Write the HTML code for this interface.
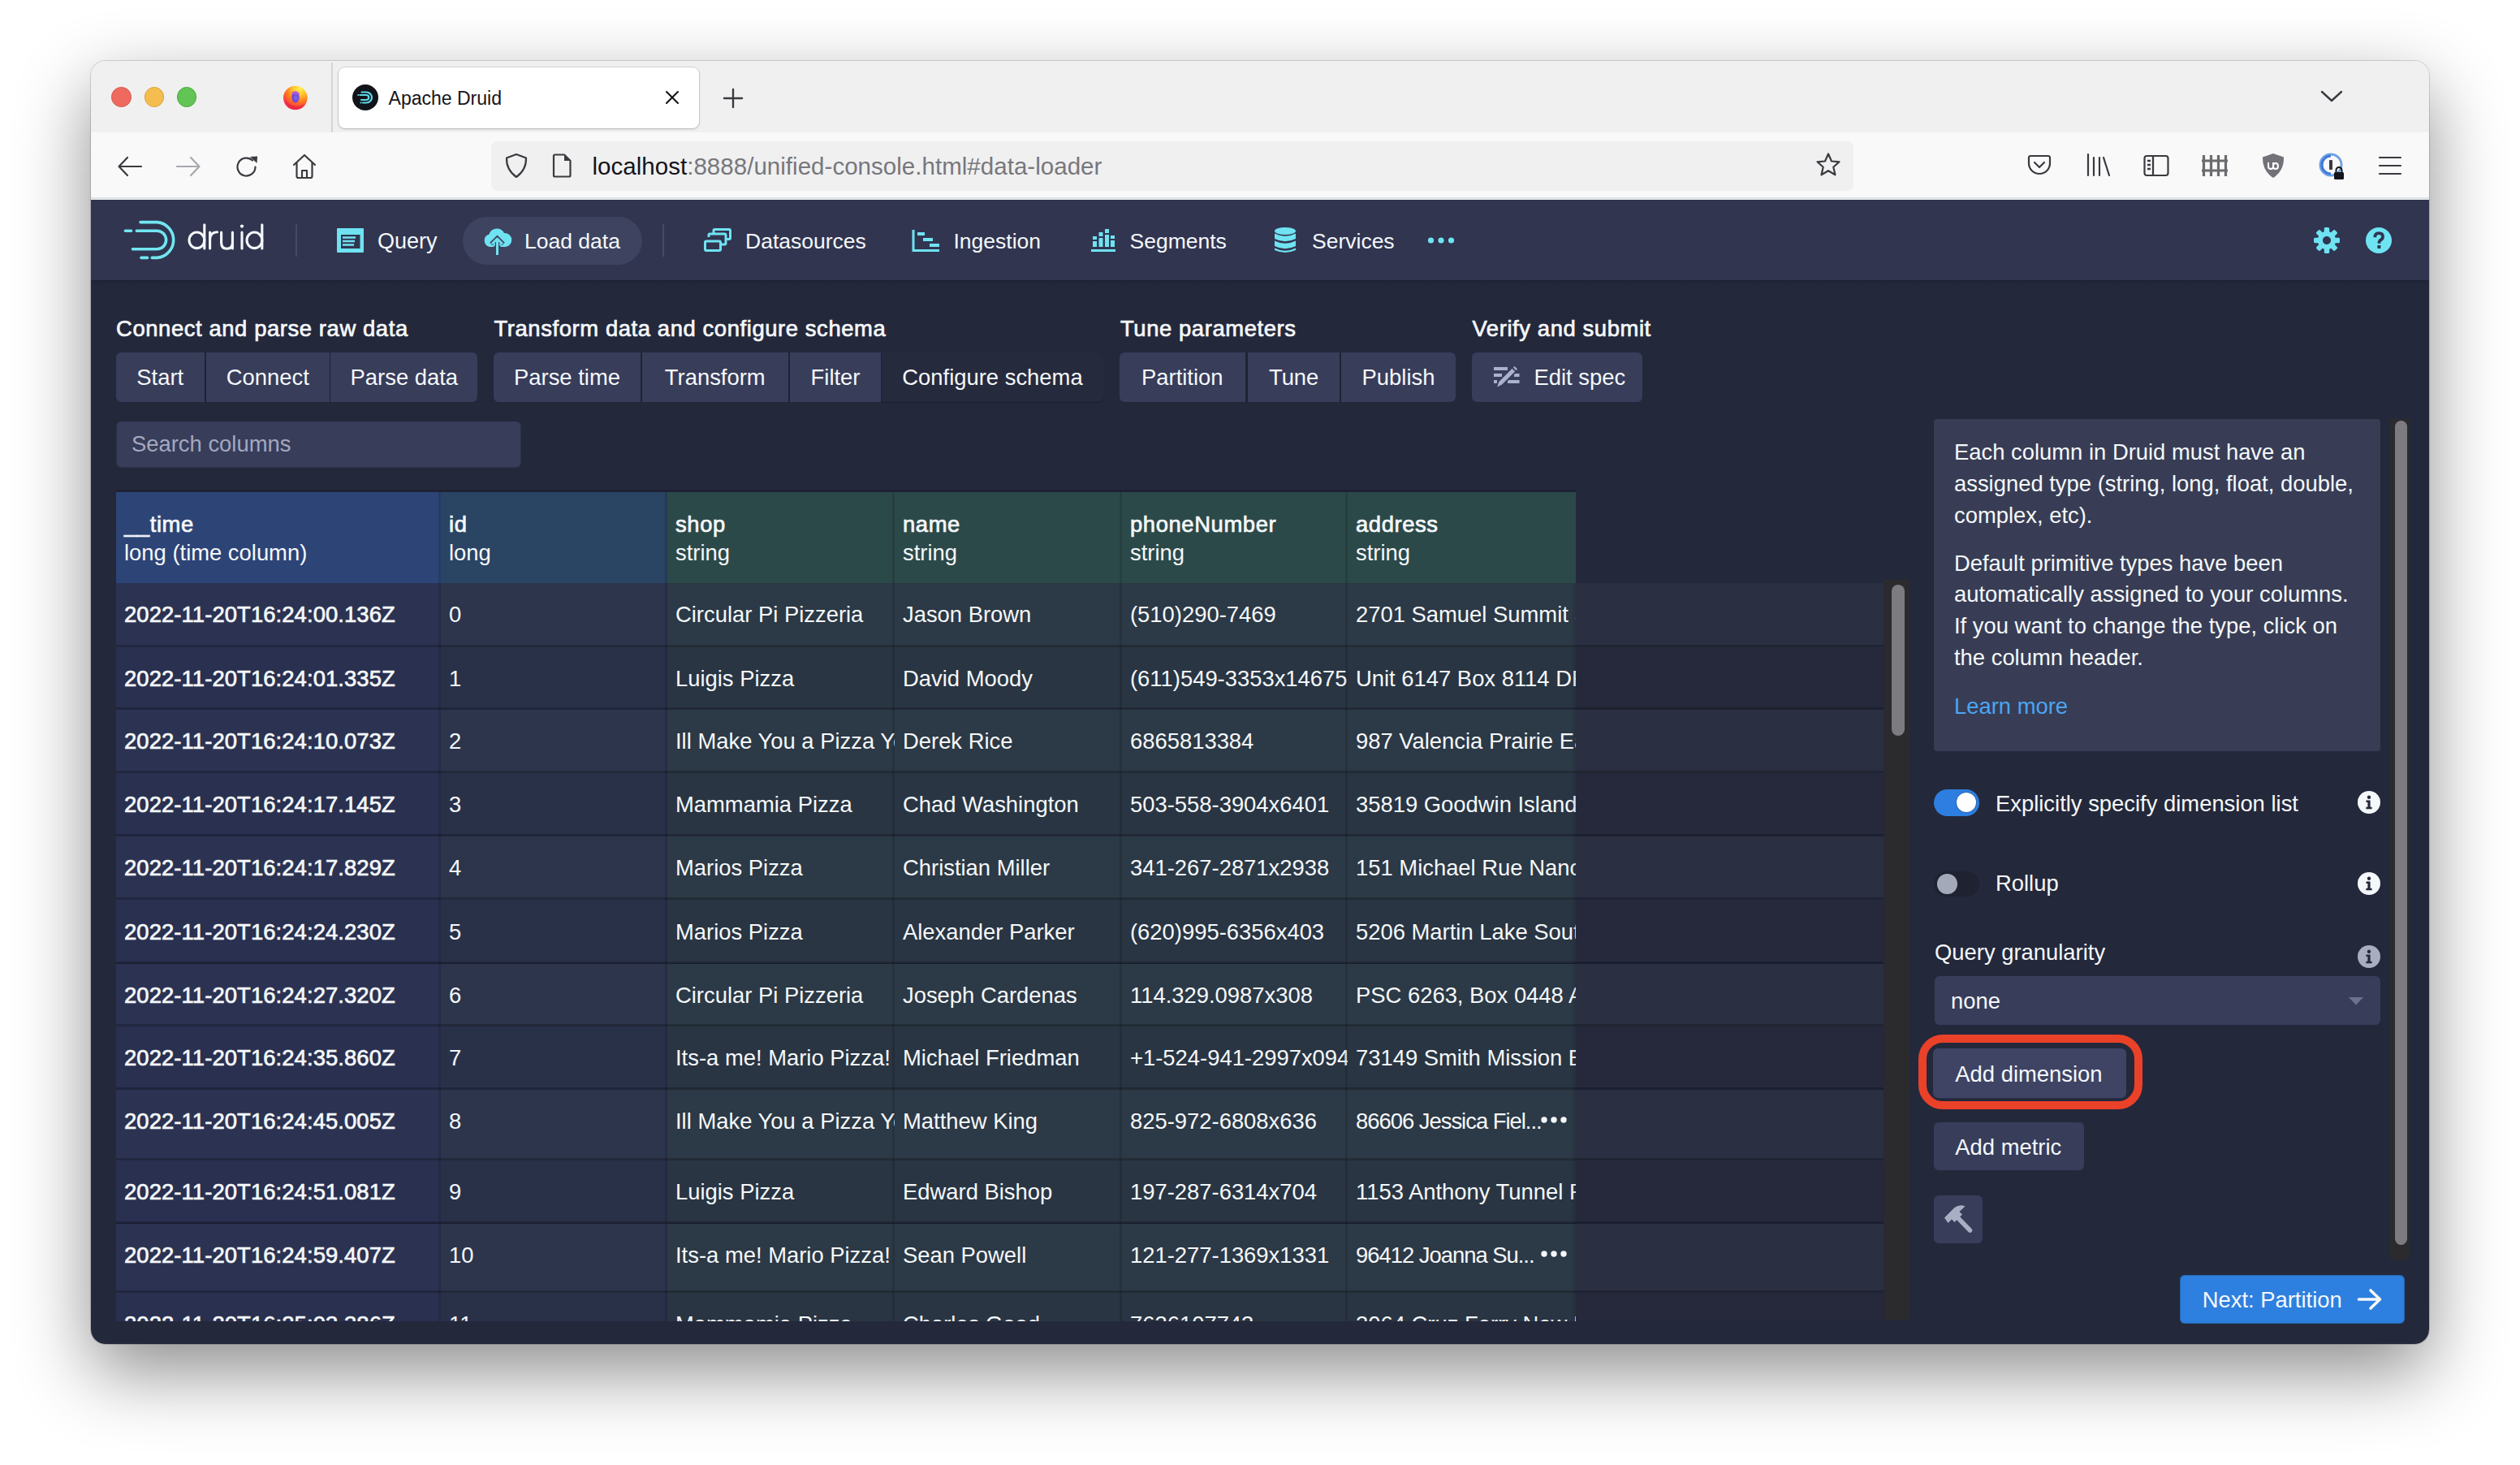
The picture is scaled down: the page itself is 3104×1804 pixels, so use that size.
<!DOCTYPE html>
<html><head><meta charset="utf-8">
<style>
*{box-sizing:border-box;margin:0;padding:0}
html,body{width:3104px;height:1804px;overflow:hidden;background:#ffffff;font-family:"Liberation Sans",sans-serif}
.abs{position:absolute}
#win{position:absolute;left:112px;top:75px;width:2880px;height:1580px;border-radius:18px;overflow:hidden;background:#f0f0f0;
 box-shadow:0 0 0 1px rgba(0,0,0,0.14),0 34px 90px 0 rgba(0,0,0,0.45)}
#inner{position:absolute;left:-112px;top:-75px;width:3104px;height:1804px}
.t{position:absolute;white-space:pre;line-height:1}
.w{color:#f5f8fa}
</style></head>
<body>
<div id="win"><div id="inner">
 <!-- tab bar -->
 <div class="abs" style="left:0;top:75px;width:3104px;height:88px;background:#f0f0f0"></div>
 <!-- toolbar -->
 <div class="abs" style="left:0;top:163px;width:3104px;height:82px;background:#f9f9f9;border-bottom:2px solid #dde3ea"></div>

 <!-- traffic lights -->
 <div class="abs" style="left:137.4px;top:107.4px;width:24.5px;height:24.5px;border-radius:50%;background:#ee6a5f;border:1px solid #d8584e"></div>
 <div class="abs" style="left:177.5px;top:107.4px;width:24.5px;height:24.5px;border-radius:50%;background:#f5bd4f;border:1px solid #d9a13a"></div>
 <div class="abs" style="left:217.6px;top:107.4px;width:24.5px;height:24.5px;border-radius:50%;background:#61c454;border:1px solid #4ea73f"></div>
 <!-- firefox logo -->
 <svg class="abs" style="left:348px;top:104px" width="32" height="32" viewBox="0 0 32 32">
  <defs><radialGradient id="ffg" cx="0.68" cy="0.12" r="1"><stop offset="0" stop-color="#fff44f"/><stop offset="0.3" stop-color="#ffbd2e"/><stop offset="0.55" stop-color="#ff7a1a"/><stop offset="0.8" stop-color="#ff3a45"/><stop offset="1" stop-color="#d91c5a"/></radialGradient>
  <radialGradient id="ffp" cx="0.55" cy="0.55" r="0.6"><stop offset="0" stop-color="#7a6bff"/><stop offset="1" stop-color="#6b34c9"/></radialGradient></defs>
  <circle cx="15.8" cy="16.5" r="14.8" fill="url(#ffg)"/>
  <ellipse cx="16" cy="15.8" rx="4.6" ry="6.8" fill="url(#ffp)"/>
  <path d="M11.5 10 Q16 6.5 20.5 10.5 L20.5 13.5 Q16 11 11.5 13 Z" fill="#b158d8"/>
  <path d="M3 18 Q4 26 12 30 Q22 32 28 24 Q20 29 12 26 Q6 23 3 18 Z" fill="#e3283e" opacity="0.8"/>
 </svg>
 <!-- tab separator -->
 <div class="abs" style="left:407.5px;top:77px;width:2px;height:86px;background:#d4d4d8"></div>
 <!-- active tab -->
 <div class="abs" style="left:417px;top:83px;width:444px;height:75px;background:#ffffff;border-radius:8px;box-shadow:0 0 0 1px rgba(0,0,0,0.10),0 1px 3px rgba(0,0,0,0.18)"></div>
 <svg class="abs" style="left:434px;top:103.6px" width="32" height="32" viewBox="0 0 32 32">
  <circle cx="16" cy="16" r="16" fill="#111419"/>
  <path d="M11.5 9.5 H17.5 A6.5 6.5 0 0 1 17.5 22.5 H13" fill="none" stroke="#5fd8ea" stroke-width="2.2" stroke-linecap="round"/>
  <path d="M9.5 13 H17.2 A3 3 0 0 1 17.2 19 H11" fill="none" stroke="#5fd8ea" stroke-width="2.2" stroke-linecap="round"/>
  <circle cx="7.3" cy="13" r="1.1" fill="#5fd8ea"/><circle cx="10.5" cy="22.5" r="1.1" fill="#5fd8ea"/>
 </svg>
 <div class="t" style="left:478.6px;top:110px;font-size:23px;color:#15141a">Apache Druid</div>
 <svg class="abs" style="left:819px;top:111px" width="18" height="18" viewBox="0 0 18 18"><path d="M2 2 L16 16 M16 2 L2 16" stroke="#15141a" stroke-width="2.1" stroke-linecap="round"/></svg>
 <svg class="abs" style="left:889px;top:107px" width="28" height="28" viewBox="0 0 28 28"><path d="M14 3 V25 M3 14 H25" stroke="#3a3a40" stroke-width="2.4" stroke-linecap="round"/></svg>
 <svg class="abs" style="left:2857px;top:109px" width="30" height="20" viewBox="0 0 30 20"><path d="M3 4 L15 15 L27 4" fill="none" stroke="#3a3a40" stroke-width="2.4" stroke-linecap="round" stroke-linejoin="round"/></svg>

 <!-- toolbar nav icons -->
 <svg class="abs" style="left:143px;top:190px" width="34" height="30" viewBox="0 0 34 30"><path d="M31 15 H4 M14 4 L3.5 15 L14 26" fill="none" stroke="#3a3a40" stroke-width="2.2" stroke-linecap="round" stroke-linejoin="round"/></svg>
 <svg class="abs" style="left:215px;top:190px" width="34" height="30" viewBox="0 0 34 30"><path d="M3 15 H30 M20 4 L30.5 15 L20 26" fill="none" stroke="#a8a8ad" stroke-width="2.2" stroke-linecap="round" stroke-linejoin="round"/></svg>
 <svg class="abs" style="left:288px;top:190px" width="32" height="32" viewBox="0 0 32 32"><path d="M26.5 15.5 A11 11 0 1 1 23 7.5" fill="none" stroke="#3a3a40" stroke-width="2.2" stroke-linecap="round"/><path d="M20 3 L29 2.5 L28.5 11 Z" fill="#3a3a40"/></svg>
 <svg class="abs" style="left:359px;top:188px" width="32" height="33" viewBox="0 0 32 33"><path d="M3 15 L16 3 L29 15 M6.5 12 V29 Q6.5 31 8.5 31 H23.5 Q25.5 31 25.5 29 V12 M13 31 V22 H19 V31" fill="none" stroke="#3a3a40" stroke-width="2.2" stroke-linecap="round" stroke-linejoin="round"/></svg>

 <!-- url bar -->
 <div class="abs" style="left:605px;top:174px;width:1678px;height:61px;background:#f0f0f0;border-radius:8px"></div>
 <svg class="abs" style="left:620px;top:187px" width="32" height="34" viewBox="0 0 32 34"><path d="M16 3 L28 7.5 Q28.5 22 16 31 Q3.5 22 4 7.5 Z" fill="none" stroke="#3a3a40" stroke-width="2.2" stroke-linejoin="round"/></svg>
 <svg class="abs" style="left:678px;top:188px" width="28" height="32" viewBox="0 0 28 32"><path d="M4 4 Q4 2.5 5.5 2.5 H17 L24.5 10 V28 Q24.5 29.5 23 29.5 H5.5 Q4 29.5 4 28 Z" fill="none" stroke="#3a3a40" stroke-width="2.2" stroke-linejoin="round"/><path d="M17 2.5 V10 H24.5 Z" fill="#3a3a40"/></svg>
 <div class="t" style="left:729.5px;top:189.5px;font-size:29.5px;letter-spacing:0.03px;color:#15141a">localhost<span style="color:#77777d">:8888/unified-console.html#data-loader</span></div>
 <svg class="abs" style="left:2235px;top:186px" width="34" height="34" viewBox="0 0 34 34"><path d="M17 3.5 L21 12.5 L30.5 13.3 L23.3 19.7 L25.5 29.3 L17 24.2 L8.5 29.3 L10.7 19.7 L3.5 13.3 L13 12.5 Z" fill="none" stroke="#3a3a40" stroke-width="2.2" stroke-linejoin="round"/></svg>

 <!-- right toolbar icons -->
 <svg class="abs" style="left:2496px;top:187px" width="32" height="32" viewBox="0 0 32 32"><path d="M5 5 H27 Q29 5 29 7.5 V14 A13 13 0 0 1 3 14 V7.5 Q3 5 5 5 Z" fill="none" stroke="#3a3a40" stroke-width="2.2"/><path d="M10 13 L16 19 L22 13" fill="none" stroke="#3a3a40" stroke-width="2.2" stroke-linecap="round" stroke-linejoin="round"/></svg>
 <svg class="abs" style="left:2568px;top:187px" width="34" height="32" viewBox="0 0 34 32"><path d="M4 3 V29 M11 7 V29 M18 7 V29 M23 7 L30 29" fill="none" stroke="#3a3a40" stroke-width="2.2" stroke-linecap="round"/></svg>
 <svg class="abs" style="left:2639px;top:189px" width="34" height="30" viewBox="0 0 34 30"><rect x="2.5" y="3" width="29" height="24" rx="3" fill="none" stroke="#3a3a40" stroke-width="2.2"/><path d="M13 3 V27 M6 9 H10 M6 14 H10 M6 19 H10" stroke="#3a3a40" stroke-width="2.3"/></svg>
 <svg class="abs" style="left:2711px;top:188px" width="34" height="32" viewBox="0 0 34 32"><path d="M3.5 3 V29 M12.5 3 V29 M21.5 3 V29 M30.5 3 V29 M1 10 H33 M1 22 H33" fill="none" stroke="#6b6b70" stroke-width="3.2"/></svg>
 <svg class="abs" style="left:2784px;top:187px" width="32" height="34" viewBox="0 0 32 34"><path d="M16 2 L29 6.5 Q29.5 23 16 32 Q2.5 23 3 6.5 Z" fill="#727278"/><path d="M10 13 V18 Q10 21 13 21 Q16 21 16 18 V13 M16 18 Q16 14 19 14 Q22 14 22 17.5 Q22 21 19 21 Q16 21 16 18" fill="none" stroke="#ffffff" stroke-width="2"/></svg>
 <svg class="abs" style="left:2855px;top:187px" width="34" height="36" viewBox="0 0 34 36"><circle cx="16" cy="16" r="13" fill="none" stroke="#6ea2e6" stroke-width="3"/><path d="M16 5 A11 11 0 0 0 16 27" fill="none" stroke="#3f7ad6" stroke-width="3"/><rect x="14" y="10" width="4" height="12" rx="1" fill="#3a3a40"/><rect x="20" y="25" width="12" height="9" rx="1.5" fill="#15141a"/><path d="M22.5 25 V22.5 A3.5 3.5 0 0 1 29.5 22.5 V25" fill="none" stroke="#15141a" stroke-width="2"/></svg>
 <svg class="abs" style="left:2927px;top:189px" width="34" height="30" viewBox="0 0 34 30"><path d="M4 5 H30 M4 15 H30 M4 25 H30" stroke="#3a3a40" stroke-width="2.2" stroke-linecap="round"/></svg>

 <!-- druid header -->
 <div class="abs" style="left:0;top:246px;width:3104px;height:99px;background:#313550"></div>
 <!-- content -->
 <div class="abs" style="left:0;top:345px;width:3104px;height:1310px;background:#24283b"></div>
 <div class="abs" style="left:0;top:345px;width:3104px;height:5px;background:linear-gradient(#1d2136,rgba(36,40,59,0))"></div>

 <!-- druid logo -->
 <svg class="abs" style="left:140px;top:260px" width="200" height="70" viewBox="140 260 200 70">
  <g fill="none" stroke="#72e6f0" stroke-width="3.6" stroke-linecap="round">
   <path d="M173 273.6 H193.8 A22 22 0 0 1 193.8 317.4 H187.3"/>
   <path d="M174 317.4 H181.5"/>
   <path d="M168.3 284.3 H193.4 A11.2 11.2 0 0 1 193.4 306.7 H163.5"/>
   <path d="M154.5 284.3 H161.5"/>
  </g>
  <g fill="none" stroke="#f5f8fa" stroke-width="3.1" stroke-linecap="round">
   <ellipse cx="242.4" cy="295.8" rx="9.4" ry="9.8"/><path d="M251.8 276.8 V306"/>
   <path d="M258.6 286 V306 M258.6 295 Q258.8 286 267.6 285.8"/>
   <path d="M272.6 286 V299 Q272.6 306.2 279.5 306.2 Q286.4 306.2 286.4 299 M286.4 286 V306"/>
   <path d="M298 286 V306"/>
   <ellipse cx="313.4" cy="295.8" rx="9.4" ry="9.8"/><path d="M322.8 276.8 V306"/>
  </g>
  <circle cx="298" cy="278.6" r="2.1" fill="#f5f8fa"/>
 </svg>
 <div class="abs" style="left:364px;top:276px;width:2px;height:40px;background:#454a66"></div>
 <!-- query icon -->
 <svg class="abs" style="left:415px;top:281px" width="34" height="30" viewBox="0 0 34 30"><rect x="0" y="0" width="33" height="30" rx="1" fill="#6fe3f2"/><rect x="5" y="8" width="23.5" height="17" fill="#313550"/><path d="M7 11.5 H23 M7 16 H22 M7 20.5 H21" stroke="#6fe3f2" stroke-width="2.4"/></svg>
 <div class="t w" style="left:465px;top:283.5px;font-size:27px">Query</div>
 <div class="abs" style="left:570px;top:267px;width:221px;height:59px;border-radius:30px;background:#3e4360"></div>
 <svg class="abs" style="left:594px;top:279px" width="37" height="36" viewBox="0 0 37 36"><path d="M9 25 A8 8 0 0 1 8.5 9.5 A10 10 0 0 1 27 8 A8.5 8.5 0 0 1 28.5 25 H23 L18.5 19.5 L14 25 Z" fill="#6fe3f2"/><path d="M18.5 14 V35 M11 21.5 L18.5 14 L26 21.5" fill="none" stroke="#3e4360" stroke-width="5"/><path d="M18.5 15 V35 M12 21.5 L18.5 15 L25 21.5" fill="none" stroke="#6fe3f2" stroke-width="3" stroke-linejoin="round"/></svg>
 <div class="t w" style="left:646px;top:283.5px;font-size:26.5px">Load data</div>
 <div class="abs" style="left:816px;top:276px;width:2px;height:40px;background:#454a66"></div>
 <svg class="abs" style="left:867px;top:281px" width="34" height="29" viewBox="0 0 34 29"><path d="M12 7 V3 Q12 1.5 13.5 1.5 H31 Q32.5 1.5 32.5 3 V12 Q32.5 13.5 31 13.5 H27" fill="none" stroke="#6fe3f2" stroke-width="3"/><rect x="1.5" y="16" width="19" height="11.5" rx="1.5" fill="none" stroke="#6fe3f2" stroke-width="3"/><path d="M6 11 V8.5 Q6 7 7.5 7 H25.5 Q27 7 27 8.5 V18.5 Q27 20 25.5 20 H21" fill="none" stroke="#6fe3f2" stroke-width="3"/></svg>
 <div class="t w" style="left:918px;top:283.5px;font-size:26.5px">Datasources</div>
 <svg class="abs" style="left:1123px;top:281px" width="36" height="30" viewBox="0 0 36 30"><path d="M2 2 V27.5 H34" fill="none" stroke="#6fe3f2" stroke-width="3"/><rect x="7" y="5" width="9" height="4" fill="#6fe3f2"/><rect x="14" y="12" width="12" height="4" fill="#6fe3f2"/><rect x="22" y="19" width="12" height="4" fill="#6fe3f2"/></svg>
 <div class="t w" style="left:1174.5px;top:283.5px;font-size:26.5px">Ingestion</div>
 <svg class="abs" style="left:1343px;top:279px" width="32" height="32" viewBox="0 0 32 32"><rect x="1" y="28" width="30" height="3" fill="#6fe3f2"/><rect x="3" y="18" width="5" height="7" fill="#6fe3f2"/><rect x="3" y="12" width="5" height="4" fill="#6fe3f2"/><rect x="10.5" y="14" width="5" height="11" fill="#6fe3f2"/><rect x="10.5" y="7" width="5" height="5" fill="#6fe3f2"/><rect x="18" y="10" width="5" height="15" fill="#6fe3f2"/><rect x="18" y="3" width="5" height="5" fill="#6fe3f2"/><rect x="25" y="17" width="5" height="8" fill="#6fe3f2"/><rect x="25" y="11" width="5" height="4" fill="#6fe3f2"/></svg>
 <div class="t w" style="left:1391.5px;top:283.5px;font-size:26.5px">Segments</div>
 <svg class="abs" style="left:1569px;top:279px" width="28" height="34" viewBox="0 0 28 34"><ellipse cx="14" cy="5.5" rx="13" ry="4.5" fill="#6fe3f2"/><path d="M1 8.5 Q14 15 27 8.5 V15 Q14 21.5 1 15 Z" fill="#6fe3f2"/><path d="M1 17.5 Q14 24 27 17.5 V24 Q14 30.5 1 24 Z" fill="#6fe3f2"/><path d="M1 26.5 Q14 33 27 26.5 V29 Q14 35 1 29 Z" fill="#6fe3f2"/></svg>
 <div class="t w" style="left:1616px;top:283.5px;font-size:26.5px">Services</div>
 <svg class="abs" style="left:1757px;top:290px" width="36" height="12" viewBox="0 0 36 12"><circle cx="5.5" cy="6" r="3.6" fill="#6fe3f2"/><circle cx="18" cy="6" r="3.6" fill="#6fe3f2"/><circle cx="30.5" cy="6" r="3.6" fill="#6fe3f2"/></svg>
 <!-- gear & help -->
 <svg class="abs" style="left:2850px;top:280px" width="32" height="32" viewBox="0 0 16 16"><path fill="#6fe3f2" fill-rule="evenodd" d="M15.19 6.39h-1.85c-.11-.37-.27-.71-.45-1.04l1.36-1.36c.31-.31.31-.82 0-1.13l-1.13-1.13a.803.803 0 00-1.13 0l-1.36 1.36c-.33-.17-.67-.33-1.04-.44V.81c-.01-.45-.37-.81-.82-.81H7.18c-.45 0-.81.36-.81.81v1.84c-.38.11-.71.27-1.04.45L3.97 1.73a.803.803 0 00-1.13 0L1.71 2.86a.803.803 0 000 1.13l1.36 1.36c-.18.33-.34.67-.45 1.04H.79c-.45.01-.79.37-.79.82v1.6c0 .45.36.81.81.81h1.84c.11.37.27.71.45 1.040l-1.36 1.36c-.31.31-.31.82 0 1.13l1.130 1.13c.31.31.82.31 1.13 0l1.36-1.36c.33.18.67.34 1.04.45v1.84c0 .45.36.81.81.81h1.6c.45 0 .81-.36.81-.81v-1.84c.37-.11.71-.27 1.04-.45l1.36 1.36c.31.31.82.31 1.13 0l1.13-1.13a.803.803 0 000-1.13l-1.36-1.36c.18-.33.34-.67.45-1.04h1.84c.45 0 .81-.36.81-.81V7.2c0-.45-.36-.81-.81-.81zM8 10.5c-1.38 0-2.5-1.12-2.5-2.5S6.62 5.5 8 5.5s2.5 1.12 2.5 2.5-1.12 2.5-2.5 2.5z"/></svg>
 <svg class="abs" style="left:2914px;top:280px" width="32" height="32" viewBox="0 0 32 32"><circle cx="16" cy="16" r="16" fill="#6fe3f2"/><path d="M11.3 12.2 Q11.3 7.2 16.2 7.2 Q21 7.2 21 11.4 Q21 13.9 18.6 15.4 Q16.4 16.8 16.4 19.8" fill="none" stroke="#313550" stroke-width="3.8"/><rect x="14.4" y="22" width="4" height="4" fill="#313550"/></svg>

 <div class="t w" style="left:143px;top:391.3px;font-size:27.4px;-webkit-text-stroke:0.7px #f5f8fa;letter-spacing:0.6px">Connect and parse raw data</div>
 <div class="t w" style="left:608.5px;top:391.3px;font-size:27.4px;-webkit-text-stroke:0.7px #f5f8fa;letter-spacing:0.6px">Transform data and configure schema</div>
 <div class="t w" style="left:1380px;top:391.3px;font-size:27.4px;-webkit-text-stroke:0.7px #f5f8fa;letter-spacing:0.6px">Tune parameters</div>
 <div class="t w" style="left:1813.5px;top:391.3px;font-size:27.4px;-webkit-text-stroke:0.7px #f5f8fa;letter-spacing:0.6px">Verify and submit</div>
 <div class="abs" style="left:142.5px;top:433.5px;width:445.79999999999995px;height:62px;border-radius:6px;background:#1f2334"></div>
 <div class="abs" style="left:142.5px;top:433.5px;width:109.5px;height:62px;background:#383d5a;border-radius:6px 0 0 6px;box-shadow:inset 0 -1px 0 rgba(16,18,30,0.5)"></div>
 <div class="t w" style="left:142.5px;width:109.5px;text-align:center;top:450.8px;font-size:27.4px">Start</div>
 <div class="abs" style="left:253.8px;top:433.5px;width:151.89999999999998px;height:62px;background:#383d5a;border-radius:0 0 0 0;box-shadow:inset 0 -1px 0 rgba(16,18,30,0.5)"></div>
 <div class="t w" style="left:253.8px;width:151.89999999999998px;text-align:center;top:450.8px;font-size:27.4px">Connect</div>
 <div class="abs" style="left:407.4px;top:433.5px;width:180.89999999999998px;height:62px;background:#383d5a;border-radius:0 6px 6px 0;box-shadow:inset 0 -1px 0 rgba(16,18,30,0.5)"></div>
 <div class="t w" style="left:407.4px;width:180.89999999999998px;text-align:center;top:450.8px;font-size:27.4px">Parse data</div>
 <div class="abs" style="left:608px;top:433.5px;width:750.7px;height:62px;border-radius:6px;background:#1f2334"></div>
 <div class="abs" style="left:608px;top:433.5px;width:181px;height:62px;background:#383d5a;border-radius:6px 0 0 6px;box-shadow:inset 0 -1px 0 rgba(16,18,30,0.5)"></div>
 <div class="t w" style="left:608px;width:181px;text-align:center;top:450.8px;font-size:27.4px">Parse time</div>
 <div class="abs" style="left:790.5px;top:433.5px;width:180.5px;height:62px;background:#383d5a;border-radius:0 0 0 0;box-shadow:inset 0 -1px 0 rgba(16,18,30,0.5)"></div>
 <div class="t w" style="left:790.5px;width:180.5px;text-align:center;top:450.8px;font-size:27.4px">Transform</div>
 <div class="abs" style="left:973px;top:433.5px;width:112px;height:62px;background:#383d5a;border-radius:0 0 0 0;box-shadow:inset 0 -1px 0 rgba(16,18,30,0.5)"></div>
 <div class="t w" style="left:973px;width:112px;text-align:center;top:450.8px;font-size:27.4px">Filter</div>
 <div class="abs" style="left:1086.3px;top:433.5px;width:272.4000000000001px;height:62px;background:#262a3d;border-radius:0 6px 6px 0;box-shadow:inset 0 -1px 0 rgba(16,18,30,0.5)"></div>
 <div class="t w" style="left:1086.3px;width:272.4000000000001px;text-align:center;top:450.8px;font-size:27.4px">Configure schema</div>
 <div class="abs" style="left:1378.6px;top:433.5px;width:414.4000000000001px;height:62px;border-radius:6px;background:#1f2334"></div>
 <div class="abs" style="left:1378.6px;top:433.5px;width:155.4000000000001px;height:62px;background:#383d5a;border-radius:6px 0 0 6px;box-shadow:inset 0 -1px 0 rgba(16,18,30,0.5)"></div>
 <div class="t w" style="left:1378.6px;width:155.4000000000001px;text-align:center;top:450.8px;font-size:27.4px">Partition</div>
 <div class="abs" style="left:1537.3px;top:433.5px;width:112.70000000000005px;height:62px;background:#383d5a;border-radius:0 0 0 0;box-shadow:inset 0 -1px 0 rgba(16,18,30,0.5)"></div>
 <div class="t w" style="left:1537.3px;width:112.70000000000005px;text-align:center;top:450.8px;font-size:27.4px">Tune</div>
 <div class="abs" style="left:1652px;top:433.5px;width:141px;height:62px;background:#383d5a;border-radius:0 6px 6px 0;box-shadow:inset 0 -1px 0 rgba(16,18,30,0.5)"></div>
 <div class="t w" style="left:1652px;width:141px;text-align:center;top:450.8px;font-size:27.4px">Publish</div>
 <div class="abs" style="left:1813px;top:433.5px;width:209.5px;height:62px;background:#383d5a;border-radius:6px;box-shadow:inset 0 -1px 0 rgba(16,18,30,0.5)"></div>
 <svg class="abs" style="left:1838px;top:448px" width="36" height="32" viewBox="0 0 36 32"><g fill="#abb3cc"><rect x="2" y="4" width="17" height="4"/><rect x="2" y="12" width="10" height="4"/><rect x="2" y="20" width="4" height="4"/><rect x="27" y="12" width="6.5" height="4"/><rect x="19" y="20" width="14.5" height="4"/></g><path d="M7.5 21.5 L27.5 1.5 L32.5 6.5 L12.5 26.5 L4.5 30.5 Z" fill="#abb3cc" stroke="#383d5a" stroke-width="2"/><path d="M24.5 4.5 L29.5 9.5" stroke="#383d5a" stroke-width="1.8"/></svg>
 <div class="t w" style="left:1889.5px;top:450.8px;font-size:27.4px">Edit spec</div>
 <div class="abs" style="left:143px;top:517.5px;width:498.5px;height:58.5px;background:#383d5a;border-radius:6px;box-shadow:inset 0 0 0 1px rgba(16,22,26,0.25),inset 0 1px 1px rgba(16,22,26,0.4)"></div>
 <div class="t" style="left:162px;top:532.8px;font-size:27.4px;color:#a3a8c0">Search columns</div>
 <!-- table -->
 <div class="abs" style="left:143px;top:603px;width:1798px;height:3px;background:#1e2234"></div>
 <div class="abs" style="left:143px;top:606px;width:400px;height:112px;background:#2d4477"></div>
 <div class="abs" style="left:540px;top:606px;width:3px;height:112px;background:rgba(0,0,0,0.13)"></div>
 <div class="t w" style="left:153px;top:631.8px;font-size:27.4px;-webkit-text-stroke:0.7px #f5f8fa;letter-spacing:0.6px">__time</div>
 <div class="t w" style="left:153px;top:666.8px;font-size:27.4px">long (time column)</div>
 <div class="abs" style="left:543px;top:606px;width:279px;height:112px;background:#2a4464"></div>
 <div class="abs" style="left:819px;top:606px;width:3px;height:112px;background:rgba(0,0,0,0.13)"></div>
 <div class="t w" style="left:553px;top:631.8px;font-size:27.4px;-webkit-text-stroke:0.7px #f5f8fa;letter-spacing:0.6px">id</div>
 <div class="t w" style="left:553px;top:666.8px;font-size:27.4px">long</div>
 <div class="abs" style="left:822px;top:606px;width:280px;height:112px;background:#2c4949"></div>
 <div class="abs" style="left:1099px;top:606px;width:3px;height:112px;background:rgba(0,0,0,0.13)"></div>
 <div class="t w" style="left:832px;top:631.8px;font-size:27.4px;-webkit-text-stroke:0.7px #f5f8fa;letter-spacing:0.6px">shop</div>
 <div class="t w" style="left:832px;top:666.8px;font-size:27.4px">string</div>
 <div class="abs" style="left:1102px;top:606px;width:280px;height:112px;background:#2c4949"></div>
 <div class="abs" style="left:1379px;top:606px;width:3px;height:112px;background:rgba(0,0,0,0.13)"></div>
 <div class="t w" style="left:1112px;top:631.8px;font-size:27.4px;-webkit-text-stroke:0.7px #f5f8fa;letter-spacing:0.6px">name</div>
 <div class="t w" style="left:1112px;top:666.8px;font-size:27.4px">string</div>
 <div class="abs" style="left:1382px;top:606px;width:278px;height:112px;background:#2c4949"></div>
 <div class="abs" style="left:1657px;top:606px;width:3px;height:112px;background:rgba(0,0,0,0.13)"></div>
 <div class="t w" style="left:1392px;top:631.8px;font-size:27.4px;-webkit-text-stroke:0.7px #f5f8fa;letter-spacing:0.6px">phoneNumber</div>
 <div class="t w" style="left:1392px;top:666.8px;font-size:27.4px">string</div>
 <div class="abs" style="left:1660px;top:606px;width:281px;height:112px;background:#2c4949"></div>
 <div class="t w" style="left:1670px;top:631.8px;font-size:27.4px;-webkit-text-stroke:0.7px #f5f8fa;letter-spacing:0.6px">address</div>
 <div class="t w" style="left:1670px;top:666.8px;font-size:27.4px">string</div>
 <div class="abs" style="left:143px;top:718px;width:2177px;height:909px;overflow:hidden;background:#20243a">
  <div class="abs" style="left:0px;top:0px;width:400px;height:78.5px;background:#2c3352;overflow:hidden"><div class="t w" style="left:10px;top:25.3px;font-size:27.4px;-webkit-text-stroke:0.7px #f5f8fa;letter-spacing:0.1px">2022-11-20T16:24:00.136Z</div><div class="abs" style="right:0;top:0;width:3px;height:100%;background:rgba(0,0,0,0.12)"></div></div>
  <div class="abs" style="left:400px;top:0px;width:279px;height:78.5px;background:#2c354c;overflow:hidden"><div class="t w" style="left:10px;top:25.3px;font-size:27.4px">0</div><div class="abs" style="right:0;top:0;width:3px;height:100%;background:rgba(0,0,0,0.12)"></div></div>
  <div class="abs" style="left:679px;top:0px;width:280px;height:78.5px;background:#2c3946;overflow:hidden"><div class="t w" style="left:10px;top:25.3px;font-size:27.4px">Circular Pi Pizzeria</div><div class="abs" style="right:0;top:0;width:3px;height:100%;background:rgba(0,0,0,0.12)"></div></div>
  <div class="abs" style="left:959px;top:0px;width:280px;height:78.5px;background:#2c3946;overflow:hidden"><div class="t w" style="left:10px;top:25.3px;font-size:27.4px">Jason Brown</div><div class="abs" style="right:0;top:0;width:3px;height:100%;background:rgba(0,0,0,0.12)"></div></div>
  <div class="abs" style="left:1239px;top:0px;width:278px;height:78.5px;background:#2c3946;overflow:hidden"><div class="t w" style="left:10px;top:25.3px;font-size:27.4px">(510)290-7469</div><div class="abs" style="right:0;top:0;width:3px;height:100%;background:rgba(0,0,0,0.12)"></div></div>
  <div class="abs" style="left:1517px;top:0px;width:281px;height:78.5px;background:#2c3946;overflow:hidden"><div class="t w" style="left:10px;top:25.3px;font-size:27.4px">2701 Samuel Summit Suite 221</div></div>
  <div class="abs" style="left:1798px;top:0px;width:379px;height:78.5px;background:#2a2f42"></div>
  <div class="abs" style="left:0;top:75.5px;width:2177px;height:3px;background:rgba(0,0,0,0.22)"></div>
  <div class="abs" style="left:0px;top:78.5px;width:400px;height:77.0px;background:#293050;overflow:hidden"><div class="t w" style="left:10px;top:25.3px;font-size:27.4px;-webkit-text-stroke:0.7px #f5f8fa;letter-spacing:0.1px">2022-11-20T16:24:01.335Z</div><div class="abs" style="right:0;top:0;width:3px;height:100%;background:rgba(0,0,0,0.12)"></div></div>
  <div class="abs" style="left:400px;top:78.5px;width:279px;height:77.0px;background:#293149;overflow:hidden"><div class="t w" style="left:10px;top:25.3px;font-size:27.4px">1</div><div class="abs" style="right:0;top:0;width:3px;height:100%;background:rgba(0,0,0,0.12)"></div></div>
  <div class="abs" style="left:679px;top:78.5px;width:280px;height:77.0px;background:#293543;overflow:hidden"><div class="t w" style="left:10px;top:25.3px;font-size:27.4px">Luigis Pizza</div><div class="abs" style="right:0;top:0;width:3px;height:100%;background:rgba(0,0,0,0.12)"></div></div>
  <div class="abs" style="left:959px;top:78.5px;width:280px;height:77.0px;background:#293543;overflow:hidden"><div class="t w" style="left:10px;top:25.3px;font-size:27.4px">David Moody</div><div class="abs" style="right:0;top:0;width:3px;height:100%;background:rgba(0,0,0,0.12)"></div></div>
  <div class="abs" style="left:1239px;top:78.5px;width:278px;height:77.0px;background:#293543;overflow:hidden"><div class="t w" style="left:10px;top:25.3px;font-size:27.4px">(611)549-3353x14675</div><div class="abs" style="right:0;top:0;width:3px;height:100%;background:rgba(0,0,0,0.12)"></div></div>
  <div class="abs" style="left:1517px;top:78.5px;width:281px;height:77.0px;background:#293543;overflow:hidden"><div class="t w" style="left:10px;top:25.3px;font-size:27.4px">Unit 6147 Box 8114 DPO AE</div></div>
  <div class="abs" style="left:1798px;top:78.5px;width:379px;height:77.0px;background:#25293b"></div>
  <div class="abs" style="left:0;top:152.5px;width:2177px;height:3px;background:rgba(0,0,0,0.22)"></div>
  <div class="abs" style="left:0px;top:155.5px;width:400px;height:78.5px;background:#2c3352;overflow:hidden"><div class="t w" style="left:10px;top:25.3px;font-size:27.4px;-webkit-text-stroke:0.7px #f5f8fa;letter-spacing:0.1px">2022-11-20T16:24:10.073Z</div><div class="abs" style="right:0;top:0;width:3px;height:100%;background:rgba(0,0,0,0.12)"></div></div>
  <div class="abs" style="left:400px;top:155.5px;width:279px;height:78.5px;background:#2c354c;overflow:hidden"><div class="t w" style="left:10px;top:25.3px;font-size:27.4px">2</div><div class="abs" style="right:0;top:0;width:3px;height:100%;background:rgba(0,0,0,0.12)"></div></div>
  <div class="abs" style="left:679px;top:155.5px;width:280px;height:78.5px;background:#2c3946;overflow:hidden"><div class="t w" style="left:10px;top:25.3px;font-size:27.4px">Ill Make You a Pizza You Cant Refuse</div><div class="abs" style="right:0;top:0;width:3px;height:100%;background:rgba(0,0,0,0.12)"></div></div>
  <div class="abs" style="left:959px;top:155.5px;width:280px;height:78.5px;background:#2c3946;overflow:hidden"><div class="t w" style="left:10px;top:25.3px;font-size:27.4px">Derek Rice</div><div class="abs" style="right:0;top:0;width:3px;height:100%;background:rgba(0,0,0,0.12)"></div></div>
  <div class="abs" style="left:1239px;top:155.5px;width:278px;height:78.5px;background:#2c3946;overflow:hidden"><div class="t w" style="left:10px;top:25.3px;font-size:27.4px">6865813384</div><div class="abs" style="right:0;top:0;width:3px;height:100%;background:rgba(0,0,0,0.12)"></div></div>
  <div class="abs" style="left:1517px;top:155.5px;width:281px;height:78.5px;background:#2c3946;overflow:hidden"><div class="t w" style="left:10px;top:25.3px;font-size:27.4px">987 Valencia Prairie East</div></div>
  <div class="abs" style="left:1798px;top:155.5px;width:379px;height:78.5px;background:#2a2f42"></div>
  <div class="abs" style="left:0;top:231px;width:2177px;height:3px;background:rgba(0,0,0,0.22)"></div>
  <div class="abs" style="left:0px;top:234px;width:400px;height:78px;background:#293050;overflow:hidden"><div class="t w" style="left:10px;top:25.3px;font-size:27.4px;-webkit-text-stroke:0.7px #f5f8fa;letter-spacing:0.1px">2022-11-20T16:24:17.145Z</div><div class="abs" style="right:0;top:0;width:3px;height:100%;background:rgba(0,0,0,0.12)"></div></div>
  <div class="abs" style="left:400px;top:234px;width:279px;height:78px;background:#293149;overflow:hidden"><div class="t w" style="left:10px;top:25.3px;font-size:27.4px">3</div><div class="abs" style="right:0;top:0;width:3px;height:100%;background:rgba(0,0,0,0.12)"></div></div>
  <div class="abs" style="left:679px;top:234px;width:280px;height:78px;background:#293543;overflow:hidden"><div class="t w" style="left:10px;top:25.3px;font-size:27.4px">Mammamia Pizza</div><div class="abs" style="right:0;top:0;width:3px;height:100%;background:rgba(0,0,0,0.12)"></div></div>
  <div class="abs" style="left:959px;top:234px;width:280px;height:78px;background:#293543;overflow:hidden"><div class="t w" style="left:10px;top:25.3px;font-size:27.4px">Chad Washington</div><div class="abs" style="right:0;top:0;width:3px;height:100%;background:rgba(0,0,0,0.12)"></div></div>
  <div class="abs" style="left:1239px;top:234px;width:278px;height:78px;background:#293543;overflow:hidden"><div class="t w" style="left:10px;top:25.3px;font-size:27.4px">503-558-3904x6401</div><div class="abs" style="right:0;top:0;width:3px;height:100%;background:rgba(0,0,0,0.12)"></div></div>
  <div class="abs" style="left:1517px;top:234px;width:281px;height:78px;background:#293543;overflow:hidden"><div class="t w" style="left:10px;top:25.3px;font-size:27.4px">35819 Goodwin Island Apt</div></div>
  <div class="abs" style="left:1798px;top:234px;width:379px;height:78px;background:#25293b"></div>
  <div class="abs" style="left:0;top:309px;width:2177px;height:3px;background:rgba(0,0,0,0.22)"></div>
  <div class="abs" style="left:0px;top:312px;width:400px;height:78.29999999999995px;background:#2c3352;overflow:hidden"><div class="t w" style="left:10px;top:25.3px;font-size:27.4px;-webkit-text-stroke:0.7px #f5f8fa;letter-spacing:0.1px">2022-11-20T16:24:17.829Z</div><div class="abs" style="right:0;top:0;width:3px;height:100%;background:rgba(0,0,0,0.12)"></div></div>
  <div class="abs" style="left:400px;top:312px;width:279px;height:78.29999999999995px;background:#2c354c;overflow:hidden"><div class="t w" style="left:10px;top:25.3px;font-size:27.4px">4</div><div class="abs" style="right:0;top:0;width:3px;height:100%;background:rgba(0,0,0,0.12)"></div></div>
  <div class="abs" style="left:679px;top:312px;width:280px;height:78.29999999999995px;background:#2c3946;overflow:hidden"><div class="t w" style="left:10px;top:25.3px;font-size:27.4px">Marios Pizza</div><div class="abs" style="right:0;top:0;width:3px;height:100%;background:rgba(0,0,0,0.12)"></div></div>
  <div class="abs" style="left:959px;top:312px;width:280px;height:78.29999999999995px;background:#2c3946;overflow:hidden"><div class="t w" style="left:10px;top:25.3px;font-size:27.4px">Christian Miller</div><div class="abs" style="right:0;top:0;width:3px;height:100%;background:rgba(0,0,0,0.12)"></div></div>
  <div class="abs" style="left:1239px;top:312px;width:278px;height:78.29999999999995px;background:#2c3946;overflow:hidden"><div class="t w" style="left:10px;top:25.3px;font-size:27.4px">341-267-2871x2938</div><div class="abs" style="right:0;top:0;width:3px;height:100%;background:rgba(0,0,0,0.12)"></div></div>
  <div class="abs" style="left:1517px;top:312px;width:281px;height:78.29999999999995px;background:#2c3946;overflow:hidden"><div class="t w" style="left:10px;top:25.3px;font-size:27.4px">151 Michael Rue Nancy</div></div>
  <div class="abs" style="left:1798px;top:312px;width:379px;height:78.29999999999995px;background:#2a2f42"></div>
  <div class="abs" style="left:0;top:387.29999999999995px;width:2177px;height:3px;background:rgba(0,0,0,0.22)"></div>
  <div class="abs" style="left:0px;top:390.29999999999995px;width:400px;height:78.20000000000005px;background:#293050;overflow:hidden"><div class="t w" style="left:10px;top:25.3px;font-size:27.4px;-webkit-text-stroke:0.7px #f5f8fa;letter-spacing:0.1px">2022-11-20T16:24:24.230Z</div><div class="abs" style="right:0;top:0;width:3px;height:100%;background:rgba(0,0,0,0.12)"></div></div>
  <div class="abs" style="left:400px;top:390.29999999999995px;width:279px;height:78.20000000000005px;background:#293149;overflow:hidden"><div class="t w" style="left:10px;top:25.3px;font-size:27.4px">5</div><div class="abs" style="right:0;top:0;width:3px;height:100%;background:rgba(0,0,0,0.12)"></div></div>
  <div class="abs" style="left:679px;top:390.29999999999995px;width:280px;height:78.20000000000005px;background:#293543;overflow:hidden"><div class="t w" style="left:10px;top:25.3px;font-size:27.4px">Marios Pizza</div><div class="abs" style="right:0;top:0;width:3px;height:100%;background:rgba(0,0,0,0.12)"></div></div>
  <div class="abs" style="left:959px;top:390.29999999999995px;width:280px;height:78.20000000000005px;background:#293543;overflow:hidden"><div class="t w" style="left:10px;top:25.3px;font-size:27.4px">Alexander Parker</div><div class="abs" style="right:0;top:0;width:3px;height:100%;background:rgba(0,0,0,0.12)"></div></div>
  <div class="abs" style="left:1239px;top:390.29999999999995px;width:278px;height:78.20000000000005px;background:#293543;overflow:hidden"><div class="t w" style="left:10px;top:25.3px;font-size:27.4px">(620)995-6356x403</div><div class="abs" style="right:0;top:0;width:3px;height:100%;background:rgba(0,0,0,0.12)"></div></div>
  <div class="abs" style="left:1517px;top:390.29999999999995px;width:281px;height:78.20000000000005px;background:#293543;overflow:hidden"><div class="t w" style="left:10px;top:25.3px;font-size:27.4px">5206 Martin Lake South</div></div>
  <div class="abs" style="left:1798px;top:390.29999999999995px;width:379px;height:78.20000000000005px;background:#25293b"></div>
  <div class="abs" style="left:0;top:465.5px;width:2177px;height:3px;background:rgba(0,0,0,0.22)"></div>
  <div class="abs" style="left:0px;top:468.5px;width:400px;height:77.5px;background:#2c3352;overflow:hidden"><div class="t w" style="left:10px;top:25.3px;font-size:27.4px;-webkit-text-stroke:0.7px #f5f8fa;letter-spacing:0.1px">2022-11-20T16:24:27.320Z</div><div class="abs" style="right:0;top:0;width:3px;height:100%;background:rgba(0,0,0,0.12)"></div></div>
  <div class="abs" style="left:400px;top:468.5px;width:279px;height:77.5px;background:#2c354c;overflow:hidden"><div class="t w" style="left:10px;top:25.3px;font-size:27.4px">6</div><div class="abs" style="right:0;top:0;width:3px;height:100%;background:rgba(0,0,0,0.12)"></div></div>
  <div class="abs" style="left:679px;top:468.5px;width:280px;height:77.5px;background:#2c3946;overflow:hidden"><div class="t w" style="left:10px;top:25.3px;font-size:27.4px">Circular Pi Pizzeria</div><div class="abs" style="right:0;top:0;width:3px;height:100%;background:rgba(0,0,0,0.12)"></div></div>
  <div class="abs" style="left:959px;top:468.5px;width:280px;height:77.5px;background:#2c3946;overflow:hidden"><div class="t w" style="left:10px;top:25.3px;font-size:27.4px">Joseph Cardenas</div><div class="abs" style="right:0;top:0;width:3px;height:100%;background:rgba(0,0,0,0.12)"></div></div>
  <div class="abs" style="left:1239px;top:468.5px;width:278px;height:77.5px;background:#2c3946;overflow:hidden"><div class="t w" style="left:10px;top:25.3px;font-size:27.4px">114.329.0987x308</div><div class="abs" style="right:0;top:0;width:3px;height:100%;background:rgba(0,0,0,0.12)"></div></div>
  <div class="abs" style="left:1517px;top:468.5px;width:281px;height:77.5px;background:#2c3946;overflow:hidden"><div class="t w" style="left:10px;top:25.3px;font-size:27.4px">PSC 6263, Box 0448 APO</div></div>
  <div class="abs" style="left:1798px;top:468.5px;width:379px;height:77.5px;background:#2a2f42"></div>
  <div class="abs" style="left:0;top:543px;width:2177px;height:3px;background:rgba(0,0,0,0.22)"></div>
  <div class="abs" style="left:0px;top:546px;width:400px;height:78px;background:#293050;overflow:hidden"><div class="t w" style="left:10px;top:25.3px;font-size:27.4px;-webkit-text-stroke:0.7px #f5f8fa;letter-spacing:0.1px">2022-11-20T16:24:35.860Z</div><div class="abs" style="right:0;top:0;width:3px;height:100%;background:rgba(0,0,0,0.12)"></div></div>
  <div class="abs" style="left:400px;top:546px;width:279px;height:78px;background:#293149;overflow:hidden"><div class="t w" style="left:10px;top:25.3px;font-size:27.4px">7</div><div class="abs" style="right:0;top:0;width:3px;height:100%;background:rgba(0,0,0,0.12)"></div></div>
  <div class="abs" style="left:679px;top:546px;width:280px;height:78px;background:#293543;overflow:hidden"><div class="t w" style="left:10px;top:25.3px;font-size:27.4px">Its-a me! Mario Pizza!</div><div class="abs" style="right:0;top:0;width:3px;height:100%;background:rgba(0,0,0,0.12)"></div></div>
  <div class="abs" style="left:959px;top:546px;width:280px;height:78px;background:#293543;overflow:hidden"><div class="t w" style="left:10px;top:25.3px;font-size:27.4px">Michael Friedman</div><div class="abs" style="right:0;top:0;width:3px;height:100%;background:rgba(0,0,0,0.12)"></div></div>
  <div class="abs" style="left:1239px;top:546px;width:278px;height:78px;background:#293543;overflow:hidden"><div class="t w" style="left:10px;top:25.3px;font-size:27.4px">+1-524-941-2997x09444</div><div class="abs" style="right:0;top:0;width:3px;height:100%;background:rgba(0,0,0,0.12)"></div></div>
  <div class="abs" style="left:1517px;top:546px;width:281px;height:78px;background:#293543;overflow:hidden"><div class="t w" style="left:10px;top:25.3px;font-size:27.4px">73149 Smith Mission East</div></div>
  <div class="abs" style="left:1798px;top:546px;width:379px;height:78px;background:#25293b"></div>
  <div class="abs" style="left:0;top:621px;width:2177px;height:3px;background:rgba(0,0,0,0.22)"></div>
  <div class="abs" style="left:0px;top:624px;width:400px;height:86.70000000000005px;background:#2c3352;overflow:hidden"><div class="t w" style="left:10px;top:25.3px;font-size:27.4px;-webkit-text-stroke:0.7px #f5f8fa;letter-spacing:0.1px">2022-11-20T16:24:45.005Z</div><div class="abs" style="right:0;top:0;width:3px;height:100%;background:rgba(0,0,0,0.12)"></div></div>
  <div class="abs" style="left:400px;top:624px;width:279px;height:86.70000000000005px;background:#2c354c;overflow:hidden"><div class="t w" style="left:10px;top:25.3px;font-size:27.4px">8</div><div class="abs" style="right:0;top:0;width:3px;height:100%;background:rgba(0,0,0,0.12)"></div></div>
  <div class="abs" style="left:679px;top:624px;width:280px;height:86.70000000000005px;background:#2c3946;overflow:hidden"><div class="t w" style="left:10px;top:25.3px;font-size:27.4px">Ill Make You a Pizza You Cant Refuse</div><div class="abs" style="right:0;top:0;width:3px;height:100%;background:rgba(0,0,0,0.12)"></div></div>
  <div class="abs" style="left:959px;top:624px;width:280px;height:86.70000000000005px;background:#2c3946;overflow:hidden"><div class="t w" style="left:10px;top:25.3px;font-size:27.4px">Matthew King</div><div class="abs" style="right:0;top:0;width:3px;height:100%;background:rgba(0,0,0,0.12)"></div></div>
  <div class="abs" style="left:1239px;top:624px;width:278px;height:86.70000000000005px;background:#2c3946;overflow:hidden"><div class="t w" style="left:10px;top:25.3px;font-size:27.4px">825-972-6808x636</div><div class="abs" style="right:0;top:0;width:3px;height:100%;background:rgba(0,0,0,0.12)"></div></div>
  <div class="abs" style="left:1517px;top:624px;width:281px;height:86.70000000000005px;background:#2c3946;overflow:hidden"><div class="t w" style="left:10px;top:25.3px;font-size:27.4px;letter-spacing:-1px">86606 Jessica Fiel...</div><svg class="abs" style="left:237px;top:32px" width="34" height="10" viewBox="0 0 34 10"><circle cx="5" cy="5" r="3.7" fill="#f5f8fa"/><circle cx="17" cy="5" r="3.7" fill="#f5f8fa"/><circle cx="29" cy="5" r="3.7" fill="#f5f8fa"/></svg></div>
  <div class="abs" style="left:1798px;top:624px;width:379px;height:86.70000000000005px;background:#2a2f42"></div>
  <div class="abs" style="left:0;top:707.7px;width:2177px;height:3px;background:rgba(0,0,0,0.22)"></div>
  <div class="abs" style="left:0px;top:710.7px;width:400px;height:77.79999999999995px;background:#293050;overflow:hidden"><div class="t w" style="left:10px;top:25.3px;font-size:27.4px;-webkit-text-stroke:0.7px #f5f8fa;letter-spacing:0.1px">2022-11-20T16:24:51.081Z</div><div class="abs" style="right:0;top:0;width:3px;height:100%;background:rgba(0,0,0,0.12)"></div></div>
  <div class="abs" style="left:400px;top:710.7px;width:279px;height:77.79999999999995px;background:#293149;overflow:hidden"><div class="t w" style="left:10px;top:25.3px;font-size:27.4px">9</div><div class="abs" style="right:0;top:0;width:3px;height:100%;background:rgba(0,0,0,0.12)"></div></div>
  <div class="abs" style="left:679px;top:710.7px;width:280px;height:77.79999999999995px;background:#293543;overflow:hidden"><div class="t w" style="left:10px;top:25.3px;font-size:27.4px">Luigis Pizza</div><div class="abs" style="right:0;top:0;width:3px;height:100%;background:rgba(0,0,0,0.12)"></div></div>
  <div class="abs" style="left:959px;top:710.7px;width:280px;height:77.79999999999995px;background:#293543;overflow:hidden"><div class="t w" style="left:10px;top:25.3px;font-size:27.4px">Edward Bishop</div><div class="abs" style="right:0;top:0;width:3px;height:100%;background:rgba(0,0,0,0.12)"></div></div>
  <div class="abs" style="left:1239px;top:710.7px;width:278px;height:77.79999999999995px;background:#293543;overflow:hidden"><div class="t w" style="left:10px;top:25.3px;font-size:27.4px">197-287-6314x704</div><div class="abs" style="right:0;top:0;width:3px;height:100%;background:rgba(0,0,0,0.12)"></div></div>
  <div class="abs" style="left:1517px;top:710.7px;width:281px;height:77.79999999999995px;background:#293543;overflow:hidden"><div class="t w" style="left:10px;top:25.3px;font-size:27.4px">1153 Anthony Tunnel Port</div></div>
  <div class="abs" style="left:1798px;top:710.7px;width:379px;height:77.79999999999995px;background:#25293b"></div>
  <div class="abs" style="left:0;top:785.5px;width:2177px;height:3px;background:rgba(0,0,0,0.22)"></div>
  <div class="abs" style="left:0px;top:788.5px;width:400px;height:85.5px;background:#2c3352;overflow:hidden"><div class="t w" style="left:10px;top:25.3px;font-size:27.4px;-webkit-text-stroke:0.7px #f5f8fa;letter-spacing:0.1px">2022-11-20T16:24:59.407Z</div><div class="abs" style="right:0;top:0;width:3px;height:100%;background:rgba(0,0,0,0.12)"></div></div>
  <div class="abs" style="left:400px;top:788.5px;width:279px;height:85.5px;background:#2c354c;overflow:hidden"><div class="t w" style="left:10px;top:25.3px;font-size:27.4px">10</div><div class="abs" style="right:0;top:0;width:3px;height:100%;background:rgba(0,0,0,0.12)"></div></div>
  <div class="abs" style="left:679px;top:788.5px;width:280px;height:85.5px;background:#2c3946;overflow:hidden"><div class="t w" style="left:10px;top:25.3px;font-size:27.4px">Its-a me! Mario Pizza!</div><div class="abs" style="right:0;top:0;width:3px;height:100%;background:rgba(0,0,0,0.12)"></div></div>
  <div class="abs" style="left:959px;top:788.5px;width:280px;height:85.5px;background:#2c3946;overflow:hidden"><div class="t w" style="left:10px;top:25.3px;font-size:27.4px">Sean Powell</div><div class="abs" style="right:0;top:0;width:3px;height:100%;background:rgba(0,0,0,0.12)"></div></div>
  <div class="abs" style="left:1239px;top:788.5px;width:278px;height:85.5px;background:#2c3946;overflow:hidden"><div class="t w" style="left:10px;top:25.3px;font-size:27.4px">121-277-1369x1331</div><div class="abs" style="right:0;top:0;width:3px;height:100%;background:rgba(0,0,0,0.12)"></div></div>
  <div class="abs" style="left:1517px;top:788.5px;width:281px;height:85.5px;background:#2c3946;overflow:hidden"><div class="t w" style="left:10px;top:25.3px;font-size:27.4px;letter-spacing:-1px">96412 Joanna Su...</div><svg class="abs" style="left:237px;top:32px" width="34" height="10" viewBox="0 0 34 10"><circle cx="5" cy="5" r="3.7" fill="#f5f8fa"/><circle cx="17" cy="5" r="3.7" fill="#f5f8fa"/><circle cx="29" cy="5" r="3.7" fill="#f5f8fa"/></svg></div>
  <div class="abs" style="left:1798px;top:788.5px;width:379px;height:85.5px;background:#2a2f42"></div>
  <div class="abs" style="left:0;top:871px;width:2177px;height:3px;background:rgba(0,0,0,0.22)"></div>
  <div class="abs" style="left:0px;top:874px;width:400px;height:78px;background:#293050;overflow:hidden"><div class="t w" style="left:10px;top:25.3px;font-size:27.4px;-webkit-text-stroke:0.7px #f5f8fa;letter-spacing:0.1px">2022-11-20T16:25:03.386Z</div><div class="abs" style="right:0;top:0;width:3px;height:100%;background:rgba(0,0,0,0.12)"></div></div>
  <div class="abs" style="left:400px;top:874px;width:279px;height:78px;background:#293149;overflow:hidden"><div class="t w" style="left:10px;top:25.3px;font-size:27.4px">11</div><div class="abs" style="right:0;top:0;width:3px;height:100%;background:rgba(0,0,0,0.12)"></div></div>
  <div class="abs" style="left:679px;top:874px;width:280px;height:78px;background:#293543;overflow:hidden"><div class="t w" style="left:10px;top:25.3px;font-size:27.4px">Mammamia Pizza</div><div class="abs" style="right:0;top:0;width:3px;height:100%;background:rgba(0,0,0,0.12)"></div></div>
  <div class="abs" style="left:959px;top:874px;width:280px;height:78px;background:#293543;overflow:hidden"><div class="t w" style="left:10px;top:25.3px;font-size:27.4px">Charles Good</div><div class="abs" style="right:0;top:0;width:3px;height:100%;background:rgba(0,0,0,0.12)"></div></div>
  <div class="abs" style="left:1239px;top:874px;width:278px;height:78px;background:#293543;overflow:hidden"><div class="t w" style="left:10px;top:25.3px;font-size:27.4px">7636107743</div><div class="abs" style="right:0;top:0;width:3px;height:100%;background:rgba(0,0,0,0.12)"></div></div>
  <div class="abs" style="left:1517px;top:874px;width:281px;height:78px;background:#293543;overflow:hidden"><div class="t w" style="left:10px;top:25.3px;font-size:27.4px">3064 Cruz Ferry New Lisa</div></div>
  <div class="abs" style="left:1798px;top:874px;width:379px;height:78px;background:#25293b"></div>
  <div class="abs" style="left:0;top:949px;width:2177px;height:3px;background:rgba(0,0,0,0.22)"></div>
 </div>
 <div class="abs" style="left:1935px;top:718px;width:6px;height:907px;background:linear-gradient(to right,rgba(0,0,0,0),rgba(0,0,0,0.12))"></div>
 <div class="abs" style="left:2320.5px;top:714px;width:31.5px;height:911px;background:#2b2b2d"></div>
 <div class="abs" style="left:2329.5px;top:720px;width:16.5px;height:186px;border-radius:9px;background:#7c7c80"></div>
 <!-- right panel -->
 <div class="abs" style="left:2382px;top:516px;width:550px;height:409px;background:#383d55;border-radius:4px"></div>
 <div class="t w" style="left:2407px;top:542.8px;font-size:27.4px">Each column in Druid must have an</div>
 <div class="t w" style="left:2407px;top:582.3px;font-size:27.4px">assigned type (string, long, float, double,</div>
 <div class="t w" style="left:2407px;top:621.3px;font-size:27.4px">complex, etc).</div>
 <div class="t w" style="left:2407px;top:679.5px;font-size:27.4px">Default primitive types have been</div>
 <div class="t w" style="left:2407px;top:718.3px;font-size:27.4px">automatically assigned to your columns.</div>
 <div class="t w" style="left:2407px;top:757.3px;font-size:27.4px">If you want to change the type, click on</div>
 <div class="t w" style="left:2407px;top:796.3px;font-size:27.4px">the column header.</div>
 <div class="t" style="left:2407px;top:855.6px;font-size:27.4px;color:#4ba5f2">Learn more</div>
 <div class="abs" style="left:2382px;top:972px;width:56px;height:32.5px;border-radius:17px;background:#2d7ee0"></div>
 <div class="abs" style="left:2409.5px;top:975.8px;width:24.5px;height:24.5px;border-radius:50%;background:#ffffff;box-shadow:0 0 0 1px rgba(16,22,26,0.2)"></div>
 <div class="t w" style="left:2458px;top:975.8px;font-size:27.4px">Explicitly specify dimension list</div>
 <div class="abs" style="left:2382px;top:1072.5px;width:56px;height:31px;border-radius:17px;background:#1e2231"></div>
 <div class="abs" style="left:2386px;top:1076px;width:24.5px;height:24.5px;border-radius:50%;background:#a4a9ba"></div>
 <div class="t w" style="left:2458px;top:1074.3px;font-size:27.4px">Rollup</div>
 <svg class="abs" style="left:2904px;top:974px" width="28" height="28" viewBox="0 0 28 28"><circle cx="14" cy="14" r="14" fill="#f5f8fa"/><circle cx="14" cy="7.8" r="2.2" fill="#24283b"/><path d="M10.5 11.5 H15.6 V19.8 H17.6 V22.2 H10.4 V19.8 H12.4 V13.9 H10.5 Z" fill="#24283b"/></svg>
 <svg class="abs" style="left:2904px;top:1074px" width="28" height="28" viewBox="0 0 28 28"><circle cx="14" cy="14" r="14" fill="#f5f8fa"/><circle cx="14" cy="7.8" r="2.2" fill="#24283b"/><path d="M10.5 11.5 H15.6 V19.8 H17.6 V22.2 H10.4 V19.8 H12.4 V13.9 H10.5 Z" fill="#24283b"/></svg>
 <div class="t w" style="left:2383px;top:1159.3px;font-size:27.4px">Query granularity</div>
 <svg class="abs" style="left:2904px;top:1164px" width="28" height="28" viewBox="0 0 28 28"><circle cx="14" cy="14" r="14" fill="#a8aebf"/><circle cx="14" cy="7.8" r="2.2" fill="#24283b"/><path d="M10.5 11.5 H15.6 V19.8 H17.6 V22.2 H10.4 V19.8 H12.4 V13.9 H10.5 Z" fill="#24283b"/></svg>
 <div class="abs" style="left:2383px;top:1202px;width:549px;height:60.5px;border-radius:6px;background:#383d5a;box-shadow:inset 0 -1px 0 rgba(16,18,30,0.45)"></div>
 <div class="t w" style="left:2403px;top:1218.8px;font-size:27.4px">none</div>
 <svg class="abs" style="left:2893px;top:1228px" width="18" height="10" viewBox="0 0 18 10"><path d="M0 0 H18 L9 9.5 Z" fill="#6b7190"/></svg>
 <div class="abs" style="left:2363px;top:1273.7px;width:276px;height:92.3px;border-radius:30px;border:10px solid #ea4129"></div>
 <div class="abs" style="left:2381px;top:1290.6px;width:237.5px;height:62.2px;border-radius:6px;background:#3f4465;box-shadow:inset 0 -1px 0 rgba(16,18,30,0.45)"></div>
 <div class="t w" style="left:2408.3px;top:1309.2px;font-size:27.4px">Add dimension</div>
 <div class="abs" style="left:2382.3px;top:1382.3px;width:184.3px;height:59.3px;border-radius:6px;background:#383d5a;box-shadow:inset 0 -1px 0 rgba(16,18,30,0.45)"></div>
 <div class="t w" style="left:2408.3px;top:1399.2px;font-size:27.4px">Add metric</div>
 <div class="abs" style="left:2382.3px;top:1472.4px;width:59.3px;height:59.8px;border-radius:6px;background:#383d5a;box-shadow:inset 0 -1px 0 rgba(16,18,30,0.45)"></div>
 <svg class="abs" style="left:2382px;top:1472px" width="60" height="60" viewBox="0 0 60 60"><path d="M29 27 L44.5 43" stroke="#a9afc3" stroke-width="5.5" stroke-linecap="round"/><path d="M13 27.5 L25.5 15 Q32 10.5 38.5 13.5 L31.5 20 L35 23.5 L25.5 33 L22 29.5 L17.5 34 Z" fill="#a9afc3"/></svg>
 <div class="abs" style="left:2943px;top:516px;width:25px;height:1035px;background:#2b2b2d"></div>
 <div class="abs" style="left:2949.5px;top:518px;width:15.5px;height:1015px;border-radius:8px;background:#7c7c80"></div>
 <div class="abs" style="left:2685.4px;top:1570px;width:277px;height:60px;border-radius:6px;background:#2d80df;box-shadow:inset 0 0 0 1px rgba(16,22,26,0.25)"></div>
 <div class="t w" style="left:2712.7px;top:1587.1px;font-size:27.4px">Next: Partition</div>
 <svg class="abs" style="left:2903px;top:1585px" width="32" height="30" viewBox="0 0 32 30"><path d="M2.5 15 H28 M17 4 L28.5 15 L17 26" fill="none" stroke="#f5f8fa" stroke-width="3.6" stroke-linecap="round" stroke-linejoin="round"/></svg>

</div></div>
</body></html>
